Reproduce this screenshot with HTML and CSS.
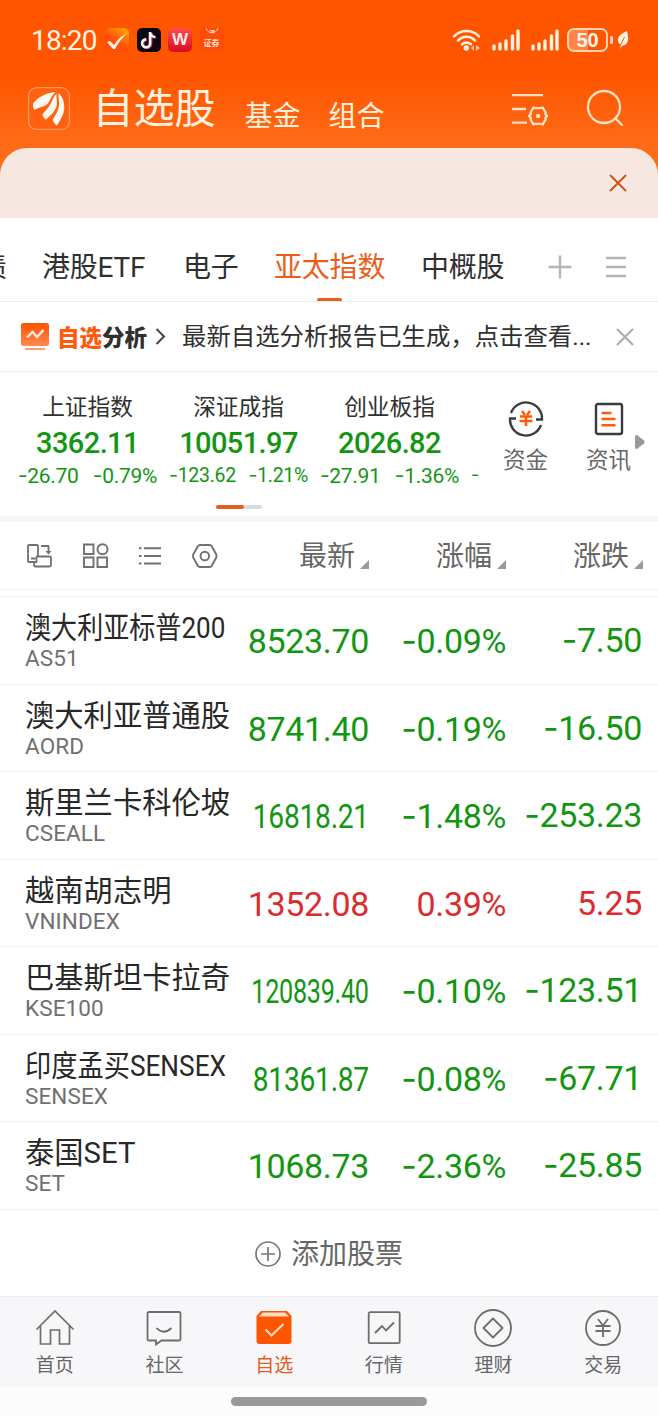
FILE: index.html
```html
<!DOCTYPE html>
<html lang="zh-CN">
<head>
<meta charset="utf-8">
<title>自选股</title>
<link rel="stylesheet" href="styles.css">
</head>
<body>
<header class="top">
  <div class="status">
    <span class="clock">18:20</span>
    <div class="apps">
      <svg width="24" height="24" viewBox="0 0 24 24"><defs><linearGradient id="ga" x1="0" y1="1" x2=".7" y2="0"><stop offset=".5" stop-color="#ff4e0c"/><stop offset="1" stop-color="#ff9c00"/></linearGradient></defs><rect width="24" height="24" rx="5" fill="url(#ga)"/><path d="M2 14l3-1 4 4C13 11 17 8 22 5 17 10 13 15 10 21H8Z" fill="#fff4e4"/></svg>
      <svg width="24" height="24" viewBox="0 0 24 24"><rect width="24" height="24" rx="5" fill="#090813"/><g fill="none" stroke-width="2.500"><path d="M13.300 4v11.200a4 4 0 1 1-4-4M13.300 4c.3 3 2 4.700 5 4.900" stroke="#ed3d69" transform="translate(.8 .5)"/><path d="M13 4v11.200a4 4 0 1 1-4-4M13 4c.3 3 2 4.700 5 4.900" stroke="#fff"/></g></svg>
      <span class="wps">W</span>
      <span class="sec"><svg width="18" height="10" viewBox="0 0 18 10"><path d="M3 0a6.200 6.200 0 0 0 12 0" fill="none" stroke="#ffc9a5" stroke-width="1"/><path d="M6 2h6L10 6 9 4Z" fill="#ffd8bb"/></svg><b>证券</b></span>
    </div>
    <div class="signals">
      <svg width="29" height="24" viewBox="0 0 29 24"><g fill="none" stroke="#fff0df" stroke-width="2.500" stroke-linecap="round"><path d="M2 8.500C9 1.200 20 1.200 27 8.500M6 12.600c5-5 12-5 17 0M10 16.300c3-2.500 6-2.500 9 0"/></g><circle cx="14.300" cy="20" r="2.800" fill="#fff0df"/><path d="M22 17l-3 3 3 3zM24 17l4 3-4 3z" fill="#ffc69e"/></svg>
      <svg class="bars" width="28" height="22" viewBox="0 0 28 22"><path d="M2 20v-3M8 20v-5M14 20v-8M20.500 20V7M26 20V2" stroke="#fff0df" stroke-width="3.400" stroke-linecap="round"/></svg>
      <svg class="bars" width="28" height="22" viewBox="0 0 28 22"><path d="M2 20v-3M8 20v-5M14 20v-8M20.500 20V7M26 20V2" stroke="#fff0df" stroke-width="3.400" stroke-linecap="round"/></svg>
      <span class="battery">50</span><i class="nub"></i>
      <svg width="12" height="18" viewBox="0 0 12 18"><path d="M10 0c2 7 2 14-5 15l-2 3 .5-4C-1 10 0 4 10 0Z" fill="#fff0df"/><path d="M7.500 6 3 15" stroke="#ff5b08" stroke-width="1"/></svg>
    </div>
  </div>
  <div class="titlebar">
    <svg class="logo" width="42" height="43" viewBox="0 0 42 43"><rect x=".6" y=".6" width="40.800" height="41.800" rx="8" fill="#ff6110" stroke="#ff995f" stroke-width="1.200"/><g fill="#fff8ef"><path d="M27.500 5C18 6 10 10 5 16.500Q4.500 20 6.500 23C11 20 16 20 19.500 17 22 14 24 8 27.500 5Z"/><path d="M28.500 6.500C25 10 24 15 21.500 18.500 19.500 22 16.500 24.500 14.500 27.500Q15 31 18 32.500C22.500 28.500 27 24.500 28.500 19.500 29.800 15 28 10 28.500 6.500Z"/><path d="M30.500 6C30 10 32 15 30.800 20 29.800 25 27 28.500 24.800 32.500Q25.500 36.500 29 38.500C32 33 36 28 36.300 21 36.500 14 34 9 30.500 6Z"/></g></svg>
    <h1>自选股</h1><span class="sub">基金</span><span class="sub">组合</span>
    <div class="tools">
      <svg width="38" height="34" viewBox="0 0 38 34"><g fill="none" stroke="#ffe0c4" stroke-width="2.300"><path d="M1 2.200h31M1 16h14M1 29.700h15"/><path d="M22.500 14.500 24.200 15.200H30l1.700-.7 3 5-.4 1.600 1.900 1.900-1.900 1.900.4 1.600-3 5-1.700-.7H24.200l-1.700.7-3-5 .4-1.600L18 23l1.900-1.900-.4-1.600Z" stroke-linejoin="round"/></g><circle cx="27.100" cy="23" r="2.200" fill="#ffe0c4"/></svg>
      <svg width="38" height="38" viewBox="0 0 38 38"><g fill="none" stroke="#ffe0c4" stroke-width="2.300" stroke-linecap="round"><circle cx="18" cy="18" r="16"/><path d="M29.500 29.500 36 36"/></g></svg>
    </div>
  </div>
  <div class="banner"><svg width="18" height="18" viewBox="0 0 18 18"><path d="m1 1 16 16M17 1 1 17" stroke="#d15019" stroke-width="1.900"/></svg></div>
</header>

<nav class="tabs">
  <span class="t0">债</span><span class="t1">港股ETF</span><span class="t2">电子</span><span class="t3 on">亚太指数</span><span class="t4">中概股</span>
  <svg class="plus" width="24" height="24" viewBox="0 0 24 24"><path d="M12 .5v23M.5 12h23" stroke="#b5b5b5" stroke-width="2.400"/></svg>
  <svg width="22" height="22" viewBox="0 0 22 22"><path d="M1 2h20M1 11h20M1 20h20" stroke="#b5b5b5" stroke-width="2.300"/></svg>
</nav>

<section class="notice">
  <svg width="29" height="28" viewBox="0 0 29 28"><defs><linearGradient id="gn" x1="0" y1="0" x2="0" y2="1"><stop stop-color="#ff5100"/><stop offset="1" stop-color="#ff8a50"/></linearGradient></defs><rect width="28" height="23" rx="2.500" fill="url(#gn)"/><path d="M6 14.500 11.500 9l4.500 5L22.500 7" fill="none" stroke="#fff0df" stroke-width="2.300"/><path d="M4 26h20" stroke="#ff9e6e" stroke-width="2"/></svg>
  <strong><em>自选</em>分析</strong>
  <svg class="chev" width="11" height="17" viewBox="0 0 11 17"><path d="m1.500 1 7.500 7.500L1.500 16" fill="none" stroke="#444" stroke-width="2"/></svg>
  <p>最新自选分析报告已生成，点击查看...</p>
  <svg class="close" width="18" height="18" viewBox="0 0 18 18"><path d="m1 1 16 16M17 1 1 17" stroke="#aaa" stroke-width="2"/></svg>
</section>

<section class="market">
  <div class="index"><span>上证指数</span><b>3362.11</b><p><i><u>-</u>26.70</i><i><u>-</u>0.79%</i></p></div>
  <div class="index small"><span>深证成指</span><b>10051.97</b><p><i><u>-</u>123.62</i><i><u>-</u>1.21%</i></p></div>
  <div class="index"><span>创业板指</span><b>2026.82</b><p><i><u>-</u>27.91</i><i><u>-</u>1.36%</i></p></div>
  <div class="next"><u>-</u></div>
  <div class="link">
    <svg width="36" height="36" viewBox="0 0 36 36"><g fill="none" stroke="#3b3b3b" stroke-width="2.300"><path d="M3 12a16 16 0 0 1 31 6.500h-6M33 24A16 16 0 0 1 2 17.500h6"/></g><path d="m14 10 3 4m5-4-3 4m-7 1.500h12M11.500 20h13M18 15v10" fill="none" stroke="#ff5a0a" stroke-width="2.500"/></svg>
    <span>资金</span></div>
  <div class="link second">
    <svg width="36" height="36" viewBox="0 0 36 36"><rect x="5" y="3" width="26" height="30" rx="2" fill="none" stroke="#3b3b3b" stroke-width="2.400"/><path d="M10.500 12h10M10.500 18h14M10.500 24.300h14" stroke="#ff5a0a" stroke-width="2.500"/></svg>
    <span>资讯</span></div>
  <svg class="more" width="10" height="14" viewBox="0 0 10 14"><path d="M0 1.500Q0 0 2 0L9 5.500Q10 7 9 8.500L2 14Q0 14 0 12.500Z" fill="#999"/></svg>
  <div class="pager"><i></i></div>
</section>

<section class="head">
  <div class="views">
    <svg width="26" height="24" viewBox="0 0 26 24"><g fill="none" stroke="#707070" stroke-width="1.800" stroke-linejoin="round"><path d="M11 12V2q0-1-1-1H2Q1 1 1 2v15q0 1 1 1h5M4 14.500h4.500"/><path d="M9 12.500h13.500q1.500 0 1.500 1.500v7q0 1.500-1.500 1.500h-14Q7 22.500 7 21v-3h2.500V13M14 2h7.500v6"/></g><path d="M18.500 7h6l-3 3.500Z" fill="#707070"/></svg>
    <svg width="26" height="26" viewBox="0 0 26 26"><g fill="none" stroke="#707070" stroke-width="1.900"><path d="M1 1.500h9.500V11H1ZM1 14.500h9.500V24H1ZM14.500 14.500H24V24h-9.500Z"/><circle cx="19.500" cy="6.300" r="5"/></g></svg>
    <svg width="24" height="20" viewBox="0 0 24 20"><path d="M6 2.300h17M6 10h17M6 17.500h17M1 2.300h2.500M1 10h2.500M1 17.500h2.500" stroke="#707070" stroke-width="2.100"/></svg>
    <svg width="26" height="24" viewBox="0 0 26 24"><g fill="none" stroke="#707070" stroke-width="1.900" stroke-linejoin="round"><path d="M7.500 1h10.500l1.400.8 5 9v2.400l-5 9-1.400.8H7.500l-1.400-.8-5-9v-2.400l5-9Z"/><circle cx="12.800" cy="12" r="4.300"/></g></svg>
  </div>
  <div class="sort">最新<i></i></div><div class="sort">涨幅<i></i></div><div class="sort">涨跌<i></i></div>
</section>

<main class="list">
  <div class="row"><div class="stock"><span class="n1">澳大利亚标普200</span><small>AS51</small></div><b>8523.70</b><b><u>-</u>0.09%</b><b><u>-</u>7.50</b></div>
  <div class="row"><div class="stock"><span>澳大利亚普通股</span><small>AORD</small></div><b>8741.40</b><b><u>-</u>0.19%</b><b><u>-</u>16.50</b></div>
  <div class="row"><div class="stock"><span>斯里兰卡科伦坡</span><small>CSEALL</small></div><b class="c8">16818.21</b><b><u>-</u>1.48%</b><b><u>-</u>253.23</b></div>
  <div class="row up"><div class="stock"><span>越南胡志明</span><small>VNINDEX</small></div><b>1352.08</b><b>0.39%</b><b>5.25</b></div>
  <div class="row"><div class="stock"><span>巴基斯坦卡拉奇</span><small>KSE100</small></div><b class="c9">120839.40</b><b><u>-</u>0.10%</b><b><u>-</u>123.51</b></div>
  <div class="row"><div class="stock"><span class="n2">印度孟买SENSEX</span><small>SENSEX</small></div><b class="c8">81361.87</b><b><u>-</u>0.08%</b><b><u>-</u>67.71</b></div>
  <div class="row"><div class="stock"><span class="n3">泰国SET</span><small>SET</small></div><b>1068.73</b><b><u>-</u>2.36%</b><b><u>-</u>25.85</b></div>
</main>

<div class="add"><svg width="26" height="26" viewBox="0 0 26 26"><g fill="none" stroke="#777" stroke-width="1.700"><circle cx="13" cy="13" r="12"/><path d="M13 6v14M6 13h14"/></g></svg><span>添加股票</span></div>

<nav class="dock">
  <a><svg width="40" height="40" viewBox="0 0 40 40"><path d="M1.500 21.500 20 3l18.500 18.500M5.500 18v18h10V22h9v14h10V18" fill="none" stroke="#6d6d6d" stroke-width="1.700"/></svg>首页</a>
  <a><svg width="40" height="40" viewBox="0 0 40 40"><path d="M5 4h30q1.500 0 1.500 1.500V31q0 1.500-1.500 1.500H17.500L12 36.500v-4H5q-1.500 0-1.500-1.500V5.500Q3.500 4 5 4ZM12.500 20q7 7.500 15 0" fill="none" stroke="#6d6d6d" stroke-width="1.800"/></svg>社区</a>
  <a class="on"><svg width="40" height="40" viewBox="0 0 40 40"><path d="M7 3h26l4.500 5v25q0 3-3 3h-29q-3 0-3-3V8Z" fill="#ff5500"/><path d="M9 4.500h22l4 4H5Z" fill="#ffdfc4"/><path d="m11.500 21.500 6 6L29.500 16" fill="none" stroke="#ffdfc4" stroke-width="2"/></svg>自选</a>
  <a><svg width="40" height="40" viewBox="0 0 40 40"><rect x="4.700" y="4.200" width="31" height="31" rx="1.500" fill="none" stroke="#6d6d6d" stroke-width="1.800"/><path d="m11 25 7-7 4 4.500 8-8" fill="none" stroke="#6d6d6d" stroke-width="1.800"/></svg>行情</a>
  <a><svg width="40" height="40" viewBox="0 0 40 40"><g fill="none" stroke="#6d6d6d" stroke-width="1.800"><circle cx="20" cy="20" r="18"/><path d="m20 10.500 9.500 9.500-9.500 9.500-9.500-9.500Z" stroke-linejoin="round"/></g></svg>理财</a>
  <a><svg width="40" height="40" viewBox="0 0 40 40"><g fill="none" stroke="#6d6d6d" stroke-width="1.800"><circle cx="20" cy="20" r="17"/><path d="m15 11 5 6.500 5-6.500M20 17.500V29M12.500 18h15M12.500 23h15"/></g></svg>交易</a>
</nav>
<footer><i></i></footer>
</body>
</html>
```

FILE: styles.css
```css
* { box-sizing: border-box; }
body {
  margin: 0;
  width: 658px;
  height: 1416px;
  overflow: hidden;
  background: #fff;
  color: #303030;
  font-family: Roboto, "Noto Sans CJK SC", sans-serif;
  font-size: 28px;
}
svg { display: block; flex: none; }
i, em, u { font-style: normal; text-decoration: none; }
u { font-family: Inter, sans-serif; }
span, b, p, h1, strong, small { white-space: nowrap; }

.top { height: 218px; background: linear-gradient(#ff5500 0, #ff5500 75px, #ff6c18 145px, #ff6c18 100%); }
.status { height: 80px; padding: 0 31px; display: flex; align-items: center; }
.clock { width: 74px; color: #fff3e6; font-size: 28px; letter-spacing: -0.8px; }
.apps { display: flex; gap: 7.500px; }
.wps {
  width: 24px; height: 24px; border-radius: 5px; background: linear-gradient(#ff4e45, #da0925);
  color: #ffece9; font: bold 17px/23px "Liberation Sans", sans-serif; text-align: center;
}
.sec {
  width: 24px; height: 24px; border-radius: 5px; background: #ff4c09; color: #ffdfc8;
  display: flex; flex-direction: column; align-items: center;
}
.sec b { font-size: 8px; line-height: 11px; }
.signals { margin: 0 -2px 0 auto; display: flex; align-items: center; }
.bars { margin-left: 11px; }
.battery {
  margin-left: 8px; width: 41px; height: 24px; border: 2px solid #ffd2b5; border-radius: 7px;
  background: linear-gradient(90deg, #ff8448 50%, transparent 50%);
  color: #fff5e8; font: bold 20px/20px "Liberation Sans", sans-serif; text-align: center;
}
.nub { width: 3px; height: 8px; background: #ffd2b5; margin: 0 4px 0 2px; border-radius: 2px; }

.titlebar { height: 68px; padding-left: 28px; display: flex; color: #fff1df; }
.logo { margin-top: 7px; }
h1 { margin: 0 0 0 22.500px; font-size: 41px; line-height: 58px; font-weight: 400; width: 152px; }
.sub { font-size: 28px; line-height: 73px; width: 84px; }
.tools { margin-left: auto; margin-right: 34px; padding-top: 9px; display: flex; gap: 37px; }
.tools svg:first-child { margin-top: 4px; }
.banner {
  height: 70px; border-radius: 27px 27px 0 0; background: #f6e8e1;
  display: flex; justify-content: flex-end; align-items: center; padding-right: 31px;
}

.tabs { height: 84px; border-bottom: 1px solid #ededed; display: flex; align-items: center; line-height: 100px; overflow: hidden; }
.tabs span { height: 84px; flex: none; }
.t0 { width: 42px; text-indent: -21px; }
.t1 { width: 141px; }
.t2 { width: 91px; }
.t3 { width: 147px; color: #e95e1b; display: flex; flex-direction: column; }
.t3::after { content: ""; width: 25px; height: 4px; border-radius: 2px; background: #e95e1b; margin: -20px 0 0 43px; flex: none; }
.t1, .t2, .t3, .t4 { letter-spacing: -0.200px; }
.t4 { width: 127px; }
.tabs svg { margin-top: 14px; }
.plus { margin-right: 33px; }

.notice { height: 70px; border-bottom: 1px solid #ededed; padding-left: 21px; display: flex; align-items: center; }
.notice strong { margin-left: 7px; width: 98px; font-size: 22.500px; font-weight: 900; line-height: 68px; padding-top: 2px; }
.notice em { color: #ff5a0a; }
.chev { margin-right: 16px; }
.notice p { margin: 0; width: 434px; font-size: 24.400px; line-height: 68px; }

.market { height: 150px; border-bottom: 6px solid #f4f5f8; position: relative; display: flex; padding-left: 12px; }
.index { width: 151px; padding-top: 19px; display: flex; flex-direction: column; align-items: center; }
.index span { font-size: 22.700px; line-height: 34px; }
.index b { color: #129612; font-weight: 500; font-size: 29px; line-height: 36px; letter-spacing: -0.600px; }
.index p { margin: 0; width: 139px; display: flex; justify-content: space-between; color: #129612; font-size: 21px; line-height: 29px; letter-spacing: -0.300px; }
.small p { font-size: 19.500px; letter-spacing: -0.300px; }
.next { width: 32px; padding: 88px 0 0 6px; color: #129612; font-size: 18px; line-height: 30px; }
.link { width: 57px; padding-top: 29px; display: flex; flex-direction: column; align-items: center; color: #666; }
.link span { font-size: 22.500px; line-height: 47px; }
.link.second { margin-left: 26px; }
.more { position: absolute; left: 635px; top: 63px; }
.pager { position: absolute; left: 216px; top: 133px; width: 46px; height: 4px; border-radius: 2px; background: #d8dbdd; }
.pager i { display: block; width: 28px; height: 4px; border-radius: 2px; background: #e75f20; }

.head { height: 75px; display: grid; grid-template-columns: 233px 137px 137px 137px; border-bottom: 1px solid #f1f1f1; color: #666; background: linear-gradient(#f1f1f1, #f1f1f1) 0 67px / 100% 1px no-repeat; }
.views { height: 67px; padding-left: 27px; display: flex; align-items: center; gap: 29.600px; }
.sort { height: 67px; line-height: 70px; display: flex; justify-content: flex-end; padding-right: 1px; }
.sort i { width: 9px; height: 9px; background: #999; clip-path: polygon(100% 0, 100% 100%, 0 100%); margin: 38px 0 0 5px; }

.row { height: 87.500px; border-bottom: 1px solid #f1f1f1; padding-left: 25px; display: grid; grid-template-columns: 215px 129px 137px 136px; }
.row b { font-weight: 400; font-size: 34px; line-height: 88px; text-align: right; color: #129612; letter-spacing: -0.350px; transform-origin: right; }
.row b:last-child { line-height: 86px; }
.row.up b { color: #dc2b2f; }
.row .c8, .row .c9 { justify-self: end; }
.c8 { transform: scaleX(.83); }
.c9 { transform: scaleX(.74); }
.stock { padding-top: 11px; }
.stock span { display: block; width: max-content; font-size: 29.300px; line-height: 40px; transform-origin: left; color: #282828; }
.stock small { display: block; font-size: 22.500px; line-height: 20px; color: #707070; letter-spacing: .1px; }
.n1 { transform: scaleX(.89); }
.n2 { transform: scaleX(.895); }

.add { height: 86px; display: flex; justify-content: center; align-items: center; gap: 10px; color: #666; line-height: 82px; }
.add span { padding-top: 5px; }
.add svg { margin-top: 2px; }
.dock { height: 91px; border-top: 1px solid #ececef; background: #f7f7fa; display: grid; grid-template-columns: repeat(6, 1fr); }
.dock a { display: flex; flex-direction: column; align-items: center; padding-top: 11px; font-size: 19px; line-height: 36px; color: #666; }
.dock .on { color: #e65a1a; }
footer { height: 29px; background: #fcfcfc; padding: 10px 0 0 231px; }
footer i { display: block; width: 196px; height: 9px; border-radius: 5px; background: #999; }
```
